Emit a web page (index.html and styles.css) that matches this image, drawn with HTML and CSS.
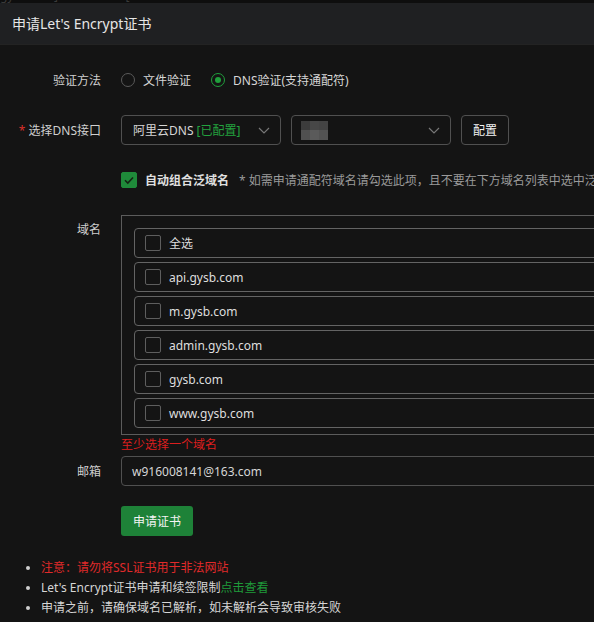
FILE: index.html
```html
<!DOCTYPE html>
<html lang="zh-CN">
<head>
<meta charset="utf-8">
<title>申请Let's Encrypt证书</title>
<link rel="stylesheet" href="styles.css">
</head>
<body>
<div class="topstrip"><span class="ghost">gysb.com]&nbsp;&nbsp;&nbsp;&nbsp;&nbsp;&nbsp;client.crt[</span></div>
<div class="header">申请Let's Encrypt证书</div>
<div class="main">
  <div class="row">
    <div class="label">验证方法</div>
    <div class="ctrl">
      <span class="radio"></span><span class="rtext">文件验证</span>
      <span class="radio on"></span><span class="rtext">DNS验证(支持通配符)</span>
    </div>
  </div>
  <div class="row">
    <div class="label"><span class="req">*</span> 选择DNS接口</div>
    <div class="ctrl">
      <div class="select">
        <span>阿里云DNS <span class="green">[已配置]</span></span>
        <svg class="chev" width="12" height="7" viewBox="0 0 12 7"><path d="M1 1 L6 6 L11 1" fill="none" stroke="#777" stroke-width="1.2"/></svg>
      </div>
      <div class="select sel2">
        <span class="blur"><i class="p1"></i><i class="p2"></i><i class="p3"></i><i class="p4"></i><i class="p5"></i><i class="p6"></i></span>
        <svg class="chev" width="12" height="7" viewBox="0 0 12 7"><path d="M1 1 L6 6 L11 1" fill="none" stroke="#777" stroke-width="1.2"/></svg>
      </div>
      <div class="btn">配置</div>
    </div>
  </div>
  <div class="row">
    <div class="label"></div>
    <div class="ctrl nowrap">
      <span class="check on"><svg width="16" height="16" viewBox="0 0 16 16"><path d="M4 8.2 L6.8 11 L12 5.5" fill="none" stroke="#142414" stroke-width="1.6"/></svg></span>
      <span class="ctext">自动组合泛域名</span>
      <span class="hint">* 如需申请通配符域名请勾选此项，且不要在下方域名列表中选中泛域名</span>
    </div>
  </div>
  <div class="row top">
    <div class="label lh">域名</div>
    <div class="ctrl col">
      <div class="dbox">
        <div class="item"><span class="check"></span><span>全选</span></div>
        <div class="item"><span class="check"></span><span>api.gysb.com</span></div>
        <div class="item"><span class="check"></span><span>m.gysb.com</span></div>
        <div class="item"><span class="check"></span><span>admin.gysb.com</span></div>
        <div class="item"><span class="check"></span><span>gysb.com</span></div>
        <div class="item"><span class="check"></span><span>www.gysb.com</span></div>
      </div>
      <div class="err">至少选择一个域名</div>
    </div>
  </div>
  <div class="row tight">
    <div class="label">邮箱</div>
    <div class="ctrl">
      <div class="input">w916008141@163.com</div>
    </div>
  </div>
  <div class="row">
    <div class="label"></div>
    <div class="ctrl">
      <div class="gbtn">申请证书</div>
    </div>
  </div>
  <ul class="notes">
    <li class="red">注意：请勿将SSL证书用于非法网站</li>
    <li>Let's Encrypt证书申请和续签限制<span class="green2">点击查看</span></li>
    <li>申请之前，请确保域名已解析，如未解析会导致审核失败</li>
  </ul>
</div>
</body>
</html>
```
FILE: styles.css
```css
html, body {
  margin: 0;
  padding: 0;
  background: #141414;
  overflow: hidden;
  width: 594px;
  height: 622px;
}
body {
  font-family: "Noto Sans", "Noto Sans CJK SC", sans-serif;
  font-size: 12px;
  color: #cfcfcf;
}
.topstrip {
  height: 3px;
  background: #0e0e0e;
  overflow: hidden;
  position: relative;
}
.ghost {
  position: absolute;
  left: 0;
  top: -10px;
  font-size: 12px;
  line-height: 12px;
  color: #3a3a3a;
  white-space: nowrap;
}
.header {
  height: 42px;
  line-height: 42px;
  background: #1f2022;
  border-bottom: 1px solid #232323;
  box-sizing: border-box;
  padding-left: 12px;
  font-size: 14px;
  color: #e6e6e6;
}
.main {
  padding-top: 20px;
}
.row {
  display: flex;
  align-items: center;
  min-height: 30px;
  margin-bottom: 20px;
}
.row.top {
  align-items: flex-start;
  margin-bottom: 1px;
}
.label {
  width: 101px;
  flex-shrink: 0;
  text-align: right;
  margin-right: 20px;
  color: #cfcfcf;
}
.label.lh {
  line-height: 30px;
}
.req {
  color: #d9302b;
}
.ctrl {
  display: flex;
  align-items: center;
  flex: 1;
  min-width: 0;
}
.ctrl.col {
  flex-direction: column;
  align-items: flex-start;
}
.nowrap {
  white-space: nowrap;
}
.radio {
  width: 12px;
  height: 12px;
  border: 1px solid #5a5a5a;
  border-radius: 50%;
  box-sizing: content-box;
  margin-right: 8px;
  position: relative;
  flex-shrink: 0;
}
.radio.on {
  border-color: #20a03c;
}
.radio.on::after {
  content: "";
  position: absolute;
  left: 3px;
  top: 3px;
  width: 6px;
  height: 6px;
  border-radius: 50%;
  background: #20a03c;
}
.rtext {
  margin-right: 20px;
  color: #d6d6d6;
}
.select {
  width: 160px;
  height: 30px;
  box-sizing: border-box;
  border: 1px solid #505050;
  border-radius: 4px;
  display: flex;
  align-items: center;
  justify-content: space-between;
  padding: 0 10px 0 11px;
  margin-right: 10px;
  color: #d6d6d6;
  flex-shrink: 0;
}
.sel2 {
  padding-left: 9px;
}
.green {
  color: #23a23e;
}
.chev {
  display: block;
}
.blur {
  display: grid;
  grid-template-columns: 9px 9px 9px;
  grid-template-rows: 9px 10px;
}
.blur i { display: block; }
.p1 { background: #3c3c3c; }
.p2 { background: #474747; }
.p3 { background: #444444; }
.p4 { background: #505050; }
.p5 { background: #5a5a5a; }
.p6 { background: #535353; }
.btn {
  width: 48px;
  height: 30px;
  box-sizing: border-box;
  border: 1px solid #505050;
  border-radius: 4px;
  display: flex;
  align-items: center;
  justify-content: center;
  color: #f2f2f2;
  flex-shrink: 0;
}
.check {
  width: 16px;
  height: 16px;
  box-sizing: border-box;
  border: 1px solid #5e5e5e;
  border-radius: 2px;
  flex-shrink: 0;
  display: block;
}
.check.on {
  background: #1f8a3a;
  border-color: #1f8a3a;
}
.check svg {
  display: block;
  margin: -1px;
}
.ctext {
  margin-left: 8px;
  color: #e0e0e0;
  font-weight: bold;
}
.hint {
  margin-left: 10px;
  color: #9a9a9a;
}
.dbox {
  width: 540px;
  flex-shrink: 0;
  box-sizing: border-box;
  border: 1px solid #5c5c5c;
  padding: 12px 0 2px 12px;
}
.item {
  height: 30px;
  box-sizing: border-box;
  border: 1px solid #646464;
  border-radius: 4px;
  margin-bottom: 4px;
  display: flex;
  align-items: center;
  padding-left: 10px;
  color: #dedede;
}
.item .check {
  margin-right: 8px;
}
.err {
  height: 20px;
  line-height: 20px;
  color: #dc1e1e;
}
.row.tight {
  margin-top: 0;
}
.input {
  width: 540px;
  flex-shrink: 0;
  height: 30px;
  box-sizing: border-box;
  border: 1px solid #505050;
  border-radius: 4px;
  display: flex;
  align-items: center;
  padding-left: 10px;
  color: #d6d6d6;
}
.gbtn {
  width: 72px;
  height: 30px;
  border-radius: 3px;
  background: #1e8238;
  color: #f4f4f4;
  display: flex;
  align-items: center;
  justify-content: center;
}
.notes {
  margin: 22px 0 0 0;
  padding-left: 41px;
  line-height: 20px;
  color: #d6d6d6;
}
.notes li.red {
  color: #e02a2a;
}
.notes li::marker {
  color: #cfcfcf;
}
.green2 {
  color: #1f9a3a;
}
```
